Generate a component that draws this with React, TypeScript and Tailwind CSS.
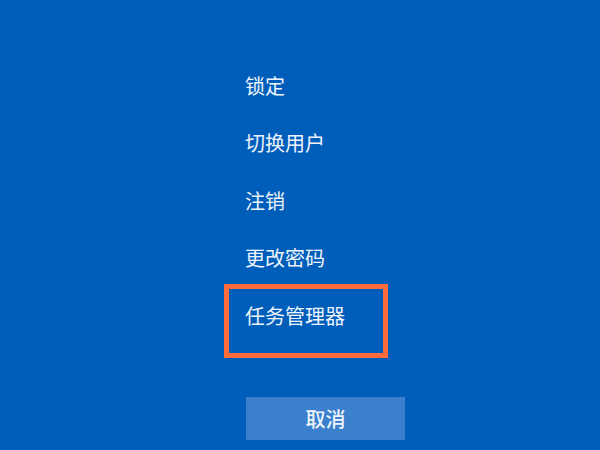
import React from "react";

const items = ["锁定", "切换用户", "注销", "更改密码"];

export default function App() {
  return (
    <div
      className="relative w-[600px] h-[450px] overflow-hidden bg-[#005EBB] text-[#EEF4FB]"
      style={{ fontFamily: '"Noto Sans CJK SC", "Noto Sans", sans-serif' }}
    >
      <div className="flex flex-col pl-[245px] pt-[57px]">
        {items.map((t) => (
          <div key={t} className="h-[57.5px] flex items-center text-[20px] leading-none">
            {t}
          </div>
        ))}
        <div className="h-[57.5px] flex items-center text-[20px] leading-none">任务管理器</div>
        <button className="mt-[52.5px] ml-px w-[159px] h-[43px] bg-[#3A80CC] text-[20px] font-medium leading-none text-[#EEF4FB] flex items-center justify-center">
          取消
        </button>
      </div>
      <div className="absolute left-[224px] top-[284px] w-[164px] h-[74px] border-[5px] border-[#FF6B3B] pointer-events-none" />
    </div>
  );
}
